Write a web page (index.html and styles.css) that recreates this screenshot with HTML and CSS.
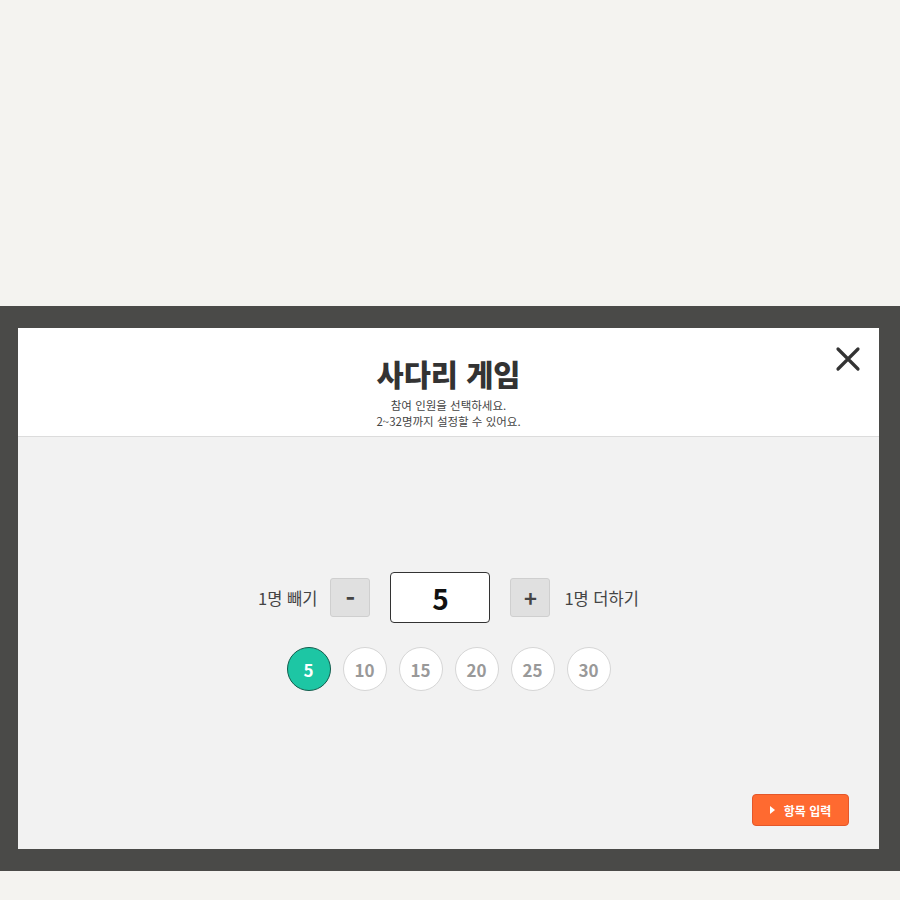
FILE: index.html
```html
<!DOCTYPE html>
<html lang="ko">

<head>
    <title>사다리 게임</title>
    <meta charset="UTF-8" />
    <link rel="stylesheet" href="styles.css">
</head>

<body>
    <div class="page">
        <div class="modalWrap">
            <div class="modal">
                <header class="modal__head">
                    <h1 class="modal__title">사다리 게임</h1>
                    <p class="modal__desc">참여 인원을 선택하세요.<br>2~32명까지 설정할 수 있어요.</p>
                    <button class="modal__close" aria-label="닫기">
                        <svg width="26" height="26" viewBox="0 0 26 26">
                            <path d="M3 3 L23 23 M23 3 L3 23" stroke="#333" stroke-width="3.2" stroke-linecap="round" />
                        </svg>
                    </button>
                </header>

                <div class="modal__body">
                    <div class="counter">
                        <span class="counter__label">1명 빼기</span>
                        <button class="counter__btn counter__btn--minus">-</button>
                        <div class="counter__value">5</div>
                        <button class="counter__btn counter__btn--plus">+</button>
                        <span class="counter__label">1명 더하기</span>
                    </div>
                    <div class="presets">
                        <button class="presets__item selected">5</button>
                        <button class="presets__item">10</button>
                        <button class="presets__item">15</button>
                        <button class="presets__item">20</button>
                        <button class="presets__item">25</button>
                        <button class="presets__item">30</button>
                    </div>
                    <div class="modal__foot">
                        <button class="nextBtn"><span class="nextBtn__arrow"></span>항목 입력</button>
                    </div>
                </div>
            </div>
        </div>
    </div>
</body>

</html>
```

FILE: styles.css
```css
:root {
    --page-bg: #f4f3f0;
    --dim: #4a4a48;
    --body-bg: #f2f2f2;
    --text: #333;
    --line: #dcdcdc;
    --accent: #1dc6a4;
    --orange: #ff6a30;
}

* {
    box-sizing: border-box;
}

body {
    margin: 0;
    background-color: var(--page-bg);
    font-family: "Noto Sans CJK KR", "Noto Sans", sans-serif;
    color: var(--text);
}

.page {
    padding-top: 306px;
}

/* Modal frame - START */
.modalWrap {
    background-color: var(--dim);
    padding: 22px 21px 22px 18px;
}

.modal {
    background-color: var(--body-bg);
    display: flex;
    flex-direction: column;
    height: 521px;
}

.modal__head {
    position: relative;
    background-color: #fff;
    border-bottom: 1px solid var(--line);
    height: 109px;
    text-align: center;
    padding-top: 25px;
}

.modal__title {
    margin: 0;
    font-size: 29.5px;
    line-height: 40px;
    font-weight: 900;
    color: #333;
}

.modal__desc {
    margin: 4px 0 0;
    font-size: 11.5px;
    line-height: 16px;
    color: #444;
}

.modal__close {
    position: absolute;
    top: 18px;
    right: 18px;
    border: none;
    background: none;
    padding: 0;
    cursor: pointer;
}

/* Modal frame - END */

/* Counter - START */
.modal__body {
    flex: 1;
    display: flex;
    flex-direction: column;
    align-items: center;
    padding-top: 135px;
}

.counter {
    display: flex;
    align-items: center;
}

.counter__label {
    font-size: 16.5px;
    color: #444;
}

.counter__btn {
    width: 40px;
    height: 39px;
    background-color: #e0e0e0;
    border: 1px solid #cfcfcf;
    border-radius: 3px;
    font-family: inherit;
    font-size: 22px;
    font-weight: 700;
    color: #444;
    padding: 0 0 2px;
    line-height: 1;
}

.counter__btn--minus {
    margin: 0 20px 0 13px;
    font-size: 26px;
}

.counter__btn--plus {
    margin: 0 14px 0 20px;
}

.counter__value {
    width: 100px;
    height: 51px;
    background-color: #fff;
    border: 1px solid #333;
    border-radius: 4px;
    display: flex;
    justify-content: center;
    align-items: center;
    font-size: 28px;
    font-weight: 700;
    color: #111;
}

.presets {
    display: flex;
    gap: 12px;
    margin-top: 24px;
}

.presets__item {
    width: 44px;
    height: 44px;
    border-radius: 50%;
    border: 1px solid #d6d6d6;
    background-color: #fff;
    font-family: inherit;
    font-size: 17px;
    font-weight: 700;
    color: #999;
    padding: 0;
}

.presets__item.selected {
    background-color: var(--accent);
    border-color: #125c4c;
    color: #fff;
}

/* Counter - END */

/* Footer - START */
.modal__foot {
    margin-top: auto;
    align-self: flex-end;
    padding: 0 30px 23px 0;
}

.nextBtn {
    width: 97px;
    height: 32px;
    background-color: var(--orange);
    border: 1px solid #e4572a;
    border-radius: 4px;
    color: #fff;
    font-family: inherit;
    font-size: 12px;
    font-weight: 700;
    display: flex;
    justify-content: center;
    align-items: center;
    gap: 9px;
    padding: 0;
}

.nextBtn__arrow {
    width: 0;
    height: 0;
    border-left: 5px solid #fff;
    border-top: 4px solid transparent;
    border-bottom: 4px solid transparent;
}

/* Footer - END */
```
